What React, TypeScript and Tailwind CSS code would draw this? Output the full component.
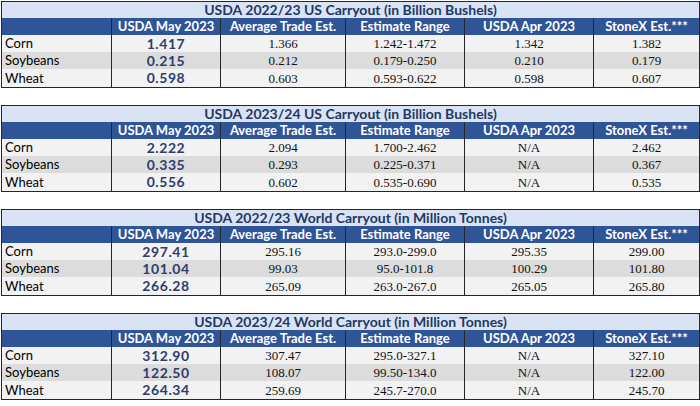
import React from "react";

type Row = { label: string; may: string; avg: string; range: string; apr: string; stonex: string };

interface Table {
  title: string;
  rows: Row[];
}

const tables: Table[] = [
  {
    title: "USDA 2022/23 US Carryout (in Billion Bushels)",
    rows: [
      { label: "Corn", may: "1.417", avg: "1.366", range: "1.242-1.472", apr: "1.342", stonex: "1.382" },
      { label: "Soybeans", may: "0.215", avg: "0.212", range: "0.179-0.250", apr: "0.210", stonex: "0.179" },
      { label: "Wheat", may: "0.598", avg: "0.603", range: "0.593-0.622", apr: "0.598", stonex: "0.607" },
    ],
  },
  {
    title: "USDA 2023/24 US Carryout (in Billion Bushels)",
    rows: [
      { label: "Corn", may: "2.222", avg: "2.094", range: "1.700-2.462", apr: "N/A", stonex: "2.462" },
      { label: "Soybeans", may: "0.335", avg: "0.293", range: "0.225-0.371", apr: "N/A", stonex: "0.367" },
      { label: "Wheat", may: "0.556", avg: "0.602", range: "0.535-0.690", apr: "N/A", stonex: "0.535" },
    ],
  },
  {
    title: "USDA 2022/23 World Carryout (in Million Tonnes)",
    rows: [
      { label: "Corn", may: "297.41", avg: "295.16", range: "293.0-299.0", apr: "295.35", stonex: "299.00" },
      { label: "Soybeans", may: "101.04", avg: "99.03", range: "95.0-101.8", apr: "100.29", stonex: "101.80" },
      { label: "Wheat", may: "266.28", avg: "265.09", range: "263.0-267.0", apr: "265.05", stonex: "265.80" },
    ],
  },
  {
    title: "USDA 2023/24 World Carryout (in Million Tonnes)",
    rows: [
      { label: "Corn", may: "312.90", avg: "307.47", range: "295.0-327.1", apr: "N/A", stonex: "327.10" },
      { label: "Soybeans", may: "122.50", avg: "108.07", range: "99.50-134.0", apr: "N/A", stonex: "122.00" },
      { label: "Wheat", may: "264.34", avg: "259.69", range: "245.7-270.0", apr: "N/A", stonex: "245.70" },
    ],
  },
];

const headers = ["USDA May 2023", "Average Trade Est.", "Estimate Range", "USDA Apr 2023", "StoneX Est.***"];

const cols = "grid grid-cols-[109px_109px_125px_119px_129px_1fr]";
const sans = "font-['Lato','Liberation_Sans',sans-serif]";
const serif = "font-['Liberation_Serif',serif]";
const divider = "border-l-[1.5px] border-[#262626]";

function CarryoutTable({ table }: { table: Table }) {
  return (
    <div className="border-[1.5px] border-[#262626] bg-white">
      <div className={`h-[16px] bg-[#dae3f3] flex items-center justify-center text-[14px] font-bold text-[#1f3864] leading-none ${sans}`}>
        {table.title}
      </div>
      <div className={`${cols} h-[17px] bg-[#2f5597] text-white text-[13px] font-bold leading-none ${sans}`}>
        <div />
        {headers.map((h) => (
          <div key={h} className={`${divider} flex items-center justify-center`}>
            {h}
          </div>
        ))}
      </div>
      {table.rows.map((r, i) => (
        <div
          key={r.label}
          className={`${cols} ${i === 2 ? "h-[18px]" : "h-[17px]"} ${i === 1 ? "bg-[#dcdcdc]" : "bg-[#f2f2f2]"} leading-none`}
        >
          <div className={`flex items-center pl-[3px] text-[13px] text-black ${sans}`}>{r.label}</div>
          <div className={`${divider} flex items-center justify-center text-[14px] font-bold tracking-[0.04em] text-[#2e3c6e] ${sans}`}>
            {r.may}
          </div>
          {[r.avg, r.range, r.apr, r.stonex].map((v, j) => (
            <div key={j} className={`${divider} flex items-center justify-center text-[13px] text-[#111] ${serif}`}>
              {v}
            </div>
          ))}
        </div>
      ))}
    </div>
  );
}

export default function App() {
  return (
    <div className="w-[700px] h-[406px] bg-white pt-px pl-px flex flex-col gap-[17px]">
      {tables.map((t) => (
        <CarryoutTable key={t.title} table={t} />
      ))}
    </div>
  );
}
